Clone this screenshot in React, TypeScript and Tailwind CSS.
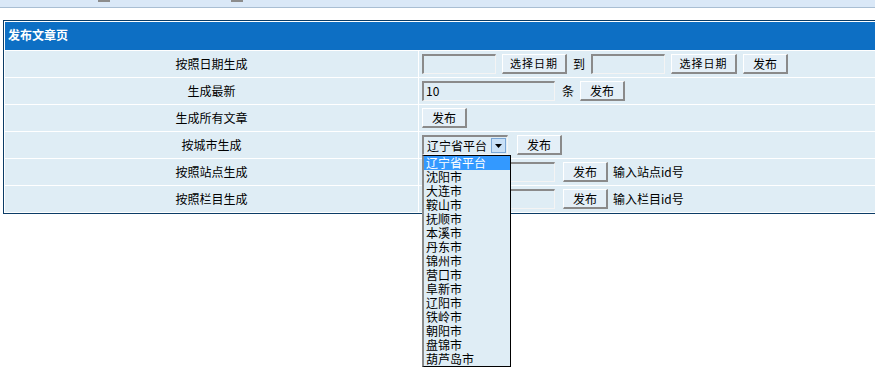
import React from 'react'

const cities = [
  '辽宁省平台',
  '沈阳市',
  '大连市',
  '鞍山市',
  '抚顺市',
  '本溪市',
  '丹东市',
  '锦州市',
  '营口市',
  '阜新市',
  '辽阳市',
  '铁岭市',
  '朝阳市',
  '盘锦市',
  '葫芦岛市',
]

const font = { fontFamily: '"Noto Sans CJK SC", "Liberation Sans", sans-serif' }

function Btn({ label, small = false, w }: { label: string; small?: boolean; w: string }) {
  return (
    <button
      className={`${w} h-[20px] flex items-center justify-center bg-[#e4eff7] border-t border-l border-t-white border-l-white border-r-2 border-b-2 border-r-[#8a8a8a] border-b-[#8a8a8a] text-black ${
        small ? 'text-[11px] tracking-[1px]' : 'text-[12px]'
      } leading-none`}
    >
      {label}
    </button>
  )
}

function Field({ w, value = '' }: { w: string; value?: string }) {
  return (
    <div
      className={`${w} h-[20px] border-t-2 border-l-2 border-t-[#8a8a8a] border-l-[#8a8a8a] border-r border-b border-r-[#f4f4f4] border-b-[#f4f4f4] text-[12px] leading-[16px] pl-[2px] text-black`}
    >
      {value}
    </div>
  )
}

function Row({ label, children }: { label: string; children?: React.ReactNode }) {
  return (
    <div className="grid grid-cols-[413px_1fr] gap-x-px h-[26px]">
      <div className="bg-[#dfedf5] flex items-center justify-center text-[12px] text-black">{label}</div>
      <div className="bg-[#dfedf5] flex items-center gap-[6px] pl-[3px] text-[12px] text-black">{children}</div>
    </div>
  )
}

export default function App() {
  return (
    <div className="w-[875px] h-[373px] overflow-hidden bg-white relative" style={font}>
      {/* top strip */}
      <div className="h-[8px] bg-[#dae8f7] border-b border-[#a9bed3] relative">
        <div className="absolute left-[98px] top-0 w-[12px] h-[2px] bg-[#8c8c8c]" />
        <div className="absolute left-[231px] top-0 w-[12px] h-[2px] bg-[#8c8c8c]" />
      </div>

      <div className="mt-[12px] ml-[3px] w-[920px] border border-[#0b3c66] bg-white p-px flex flex-col gap-px">
        <div className="h-[28px] bg-[#0d6fc4] flex items-center pl-[3px] pb-[2px] text-white font-bold text-[12px]">
          发布文章页
        </div>

        <Row label="按照日期生成">
          <Field w="w-[74px]" />
          <Btn label="选择日期" small w="w-[65px]" />
          <span>到</span>
          <Field w="w-[74px]" />
          <Btn label="选择日期" small w="w-[66px]" />
          <Btn label="发布" w="w-[45px]" />
        </Row>

        <Row label="生成最新">
          <Field w="w-[133px]" value="10" />
          <span className="ml-[1px]">条</span>
          <Btn label="发布" w="w-[45px]" />
        </Row>

        <Row label="生成所有文章">
          <Btn label="发布" w="w-[45px]" />
        </Row>

        <Row label="按城市生成">
          <div className="relative w-[86px] h-[20px] border-t-2 border-l-2 border-t-[#8a8a8a] border-l-[#8a8a8a] border-r border-b border-r-[#f4f4f4] border-b-[#f4f4f4] flex items-center">
            <span className="pl-[3px] text-[12px] leading-none">辽宁省平台</span>
            <div className="absolute right-[1px] top-[1px] w-[15px] h-[15px] bg-[#c9e0f6] border border-[#7ba7d6] flex items-center justify-center">
              <svg width="7" height="4" viewBox="0 0 7 4">
                <path d="M0 0h7L3.5 4z" fill="#000" />
              </svg>
            </div>
          </div>
          <span className="ml-[3px]">
            <Btn label="发布" w="w-[45px]" />
          </span>
        </Row>

        <Row label="按照站点生成">
          <Field w="w-[133px]" />
          <span className="ml-[2px]">
            <Btn label="发布" w="w-[45px]" />
          </span>
          <span className="-ml-[1px]">输入站点id号</span>
        </Row>

        <Row label="按照栏目生成">
          <Field w="w-[133px]" />
          <span className="ml-[2px]">
            <Btn label="发布" w="w-[45px]" />
          </span>
          <span className="-ml-[1px]">输入栏目id号</span>
        </Row>
      </div>

      {/* open select list */}
      <div className="absolute left-[422px] top-[155px] w-[89px] h-[212px] bg-[#dfedf5] border border-black border-l-2 border-l-[#8a8a8a]">
        {cities.map((c, i) => (
          <div
            key={c}
            className={`h-[14px] text-[12px] leading-[14px] pl-[2px] ${
              i === 0 ? 'bg-[#3399ff] text-white' : 'text-black'
            }`}
          >
            {c}
          </div>
        ))}
      </div>
    </div>
  )
}
